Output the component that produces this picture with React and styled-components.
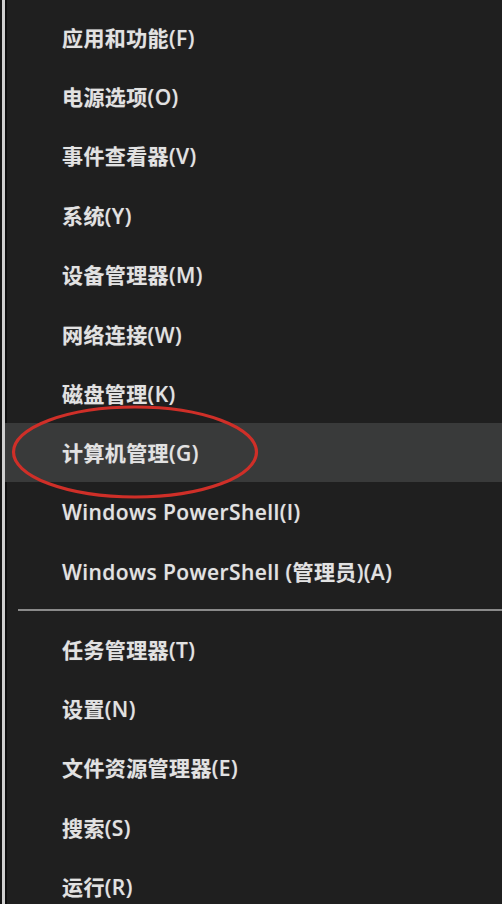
import styled, { createGlobalStyle } from "styled-components";

const GlobalStyle = createGlobalStyle`
  html, body {
    margin: 0;
    padding: 0;
    background: #1f1f1f;
  }
`;

const Menu = styled.div`
  width: 502px;
  height: 904px;
  overflow: hidden;
  box-sizing: border-box;
  background: #1f1f1f;
  border-left: 2px solid #151515;
  display: flex;
  flex-direction: row;
`;

const Edge = styled.div`
  width: 3px;
  flex: none;
  background: #cfcfcf;
  box-shadow: 2px 0 0 #0e0e0e;
`;

const List = styled.div`
  flex: 1;
  display: flex;
  flex-direction: column;
  padding-top: 7px;
`;

const Item = styled.div`
  position: relative;
  height: 59.4px;
  flex: none;
  display: flex;
  align-items: center;
  padding-left: 57px;
  background: ${(p) => (p.$active ? "#393a3a" : "transparent")};
  color: #e2e2e2;
  font-family: "Open Sans", "Noto Sans CJK SC", sans-serif;
  font-size: 21px;
  font-weight: 600;
  letter-spacing: 0.4px;
  text-shadow: 0 0 1px rgba(255, 255, 255, 0.3);
  white-space: nowrap;
`;

const Separator = styled.div`
  height: 2px;
  margin: 8px 0 8px 13px;
  background: #8a8a8a;
  flex: none;
`;

const Ring = styled.svg`
  position: absolute;
  left: 4px;
  top: -19px;
  pointer-events: none;
`;

const top = [
  "应用和功能(F)",
  "电源选项(O)",
  "事件查看器(V)",
  "系统(Y)",
  "设备管理器(M)",
  "网络连接(W)",
  "磁盘管理(K)",
  "计算机管理(G)",
  "Windows PowerShell(I)",
  "Windows PowerShell (管理员)(A)",
];

const bottom = [
  "任务管理器(T)",
  "设置(N)",
  "文件资源管理器(E)",
  "搜索(S)",
  "运行(R)",
];

export default function App() {
  return (
    <>
      <GlobalStyle />
      <Menu>
        <Edge />
        <List>
          {top.map((label, i) => (
            <Item key={label} $active={i === 7}>
              {label}
              {i === 7 && (
                <Ring width="252" height="96" viewBox="0 0 252 96">
                  <ellipse
                    cx="126"
                    cy="48"
                    rx="121.5"
                    ry="45"
                    fill="none"
                    stroke="#cf2f28"
                    strokeWidth="3.2"
                  />
                </Ring>
              )}
            </Item>
          ))}
          <Separator />
          {bottom.map((label) => (
            <Item key={label}>{label}</Item>
          ))}
        </List>
      </Menu>
    </>
  );
}
